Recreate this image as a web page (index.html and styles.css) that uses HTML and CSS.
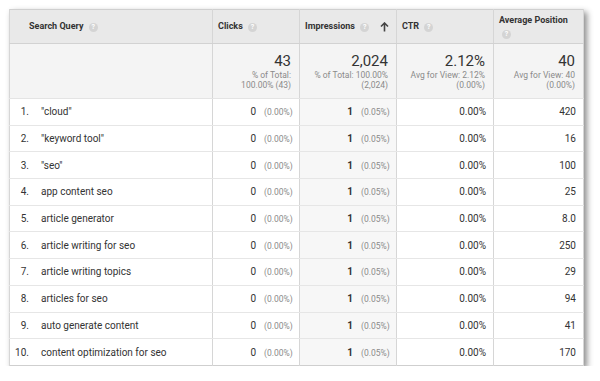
FILE: index.html
```html
<!DOCTYPE html>
<html>
<head>
<meta charset="utf-8">
<link rel="stylesheet" href="styles.css">
</head>
<body>
<div class="frame">
<table class="report">
<colgroup>
<col class="c-q"><col class="c-clicks"><col class="c-imp"><col class="c-ctr"><col class="c-pos">
</colgroup>
<thead>
<tr class="head">
<th class="hq">Search Query <i class="help">?</i></th>
<th>Clicks <i class="help">?</i></th>
<th class="sorted"><div class="hrow"><span>Impressions <i class="help">?</i></span><svg class="arrow" width="9" height="10" viewBox="0 0 9 10"><path d="M4.5 1 L4.5 9.5 M1 4.5 L4.5 1 L8 4.5" fill="none" stroke="#444" stroke-width="1.6"/></svg></div></th>
<th>CTR <i class="help">?</i></th>
<th class="hpos">Average Position <i class="help">?</i></th>
</tr>
</thead>
<tbody>
<tr class="summary">
<td></td>
<td><div class="big">43</div><div class="sub">% of Total:<br>100.00% (43)</div></td>
<td><div class="big">2,024</div><div class="sub">% of Total: 100.00%<br>(2,024)</div></td>
<td><div class="big">2.12%</div><div class="sub">Avg for View: 2.12%<br>(0.00%)</div></td>
<td><div class="big">40</div><div class="sub">Avg for View: 40<br>(0.00%)</div></td>
</tr>
<tr><td><span class="rank">1.</span>"cloud"</td><td><div class="pair"><span>0</span><span class="pct">(0.00%)</span></div></td><td class="sorted"><div class="pair"><b>1</b><span class="pct">(0.05%)</span></div></td><td class="num">0.00%</td><td class="num">420</td></tr>
<tr><td><span class="rank">2.</span>"keyword tool"</td><td><div class="pair"><span>0</span><span class="pct">(0.00%)</span></div></td><td class="sorted"><div class="pair"><b>1</b><span class="pct">(0.05%)</span></div></td><td class="num">0.00%</td><td class="num">16</td></tr>
<tr><td><span class="rank">3.</span>"seo"</td><td><div class="pair"><span>0</span><span class="pct">(0.00%)</span></div></td><td class="sorted"><div class="pair"><b>1</b><span class="pct">(0.05%)</span></div></td><td class="num">0.00%</td><td class="num">100</td></tr>
<tr><td><span class="rank">4.</span>app content seo</td><td><div class="pair"><span>0</span><span class="pct">(0.00%)</span></div></td><td class="sorted"><div class="pair"><b>1</b><span class="pct">(0.05%)</span></div></td><td class="num">0.00%</td><td class="num">25</td></tr>
<tr><td><span class="rank">5.</span>article generator</td><td><div class="pair"><span>0</span><span class="pct">(0.00%)</span></div></td><td class="sorted"><div class="pair"><b>1</b><span class="pct">(0.05%)</span></div></td><td class="num">0.00%</td><td class="num">8.0</td></tr>
<tr><td><span class="rank">6.</span>article writing for seo</td><td><div class="pair"><span>0</span><span class="pct">(0.00%)</span></div></td><td class="sorted"><div class="pair"><b>1</b><span class="pct">(0.05%)</span></div></td><td class="num">0.00%</td><td class="num">250</td></tr>
<tr><td><span class="rank">7.</span>article writing topics</td><td><div class="pair"><span>0</span><span class="pct">(0.00%)</span></div></td><td class="sorted"><div class="pair"><b>1</b><span class="pct">(0.05%)</span></div></td><td class="num">0.00%</td><td class="num">29</td></tr>
<tr><td><span class="rank">8.</span>articles for seo</td><td><div class="pair"><span>0</span><span class="pct">(0.00%)</span></div></td><td class="sorted"><div class="pair"><b>1</b><span class="pct">(0.05%)</span></div></td><td class="num">0.00%</td><td class="num">94</td></tr>
<tr><td><span class="rank">9.</span>auto generate content</td><td><div class="pair"><span>0</span><span class="pct">(0.00%)</span></div></td><td class="sorted"><div class="pair"><b>1</b><span class="pct">(0.05%)</span></div></td><td class="num">0.00%</td><td class="num">41</td></tr>
<tr><td><span class="rank">10.</span>content optimization for seo</td><td><div class="pair"><span>0</span><span class="pct">(0.00%)</span></div></td><td class="sorted"><div class="pair"><b>1</b><span class="pct">(0.05%)</span></div></td><td class="num">0.00%</td><td class="num">170</td></tr>
</tbody>
</table>
</div>
</body>
</html>
```
FILE: styles.css
```css
html, body {
  margin: 0;
  padding: 0;
  background: #fff;
}
body {
  font-family: Roboto, "Liberation Sans", Arial, sans-serif;
  color: #333;
}
.frame {
  padding: 9px 0 0 9px;
}
.report {
  width: 574px;
  border-collapse: collapse;
  table-layout: fixed;
  background: #fff;
  box-shadow: 3px 3px 6px rgba(0,0,0,0.45);
  border: 1px solid #cfcfcf;
}
.c-q { width: 203px; }
.c-clicks { width: 87px; }
.c-imp { width: 97px; }
.c-ctr { width: 97px; }
.c-pos { width: 90px; }
th, td {
  border-left: 1px solid #d6d6d6;
  border-right: 1px solid #d6d6d6;
  padding: 0;
}
.head th {
  background: #e9e9e9;
  height: 33px;
  font-size: 9px;
  font-weight: 700;
  color: #333;
  text-align: left;
  padding: 0 5px;
  border-bottom: 1px solid #d2d2d2;
  line-height: 13px;
}
.head th.hq { padding-left: 19px; }
.help {
  display: inline-block;
  width: 9px;
  height: 9px;
  border-radius: 50%;
  background: #d4d4d4;
  color: #fff;
  font-style: normal;
  font-size: 7px;
  line-height: 9px;
  text-align: center;
  font-weight: 700;
  margin-left: 3px;
  vertical-align: 0;
}
.hrow {
  display: flex;
  justify-content: space-between;
  align-items: center;
}
.arrow { display: block; margin-right: 2px; }
.summary td {
  background: #f4f4f4;
  height: 54px;
  text-align: right;
  padding: 0 8px;
  vertical-align: middle;
  border-bottom: 1px solid #e4e4e4;
}
.big {
  font-size: 15px;
  line-height: 17px;
  color: #333;
}
.sub {
  font-size: 8.5px;
  line-height: 10px;
  color: #8a8a8a;
}
tbody tr:not(.summary) td {
  height: 25.7px;
  font-size: 10px;
  border-bottom: 1px solid #e6e6e6;
  vertical-align: middle;
}
tbody tr:last-child td { border-bottom: none; }
tbody td:first-child { padding-left: 0; }
.rank {
  display: inline-block;
  width: 19px;
  text-align: right;
  margin-right: 12px;
}
td.sorted { background: #f7f7f7; }
.pair {
  display: flex;
  justify-content: flex-end;
  align-items: baseline;
  gap: 8px;
  padding-right: 7px;
}
.pair b { font-weight: 700; }
.pct {
  font-size: 8.5px;
  color: #8a8a8a;
  width: 28px;
  text-align: left;
}
td.num {
  text-align: right;
  padding-right: 7px;
}
```
